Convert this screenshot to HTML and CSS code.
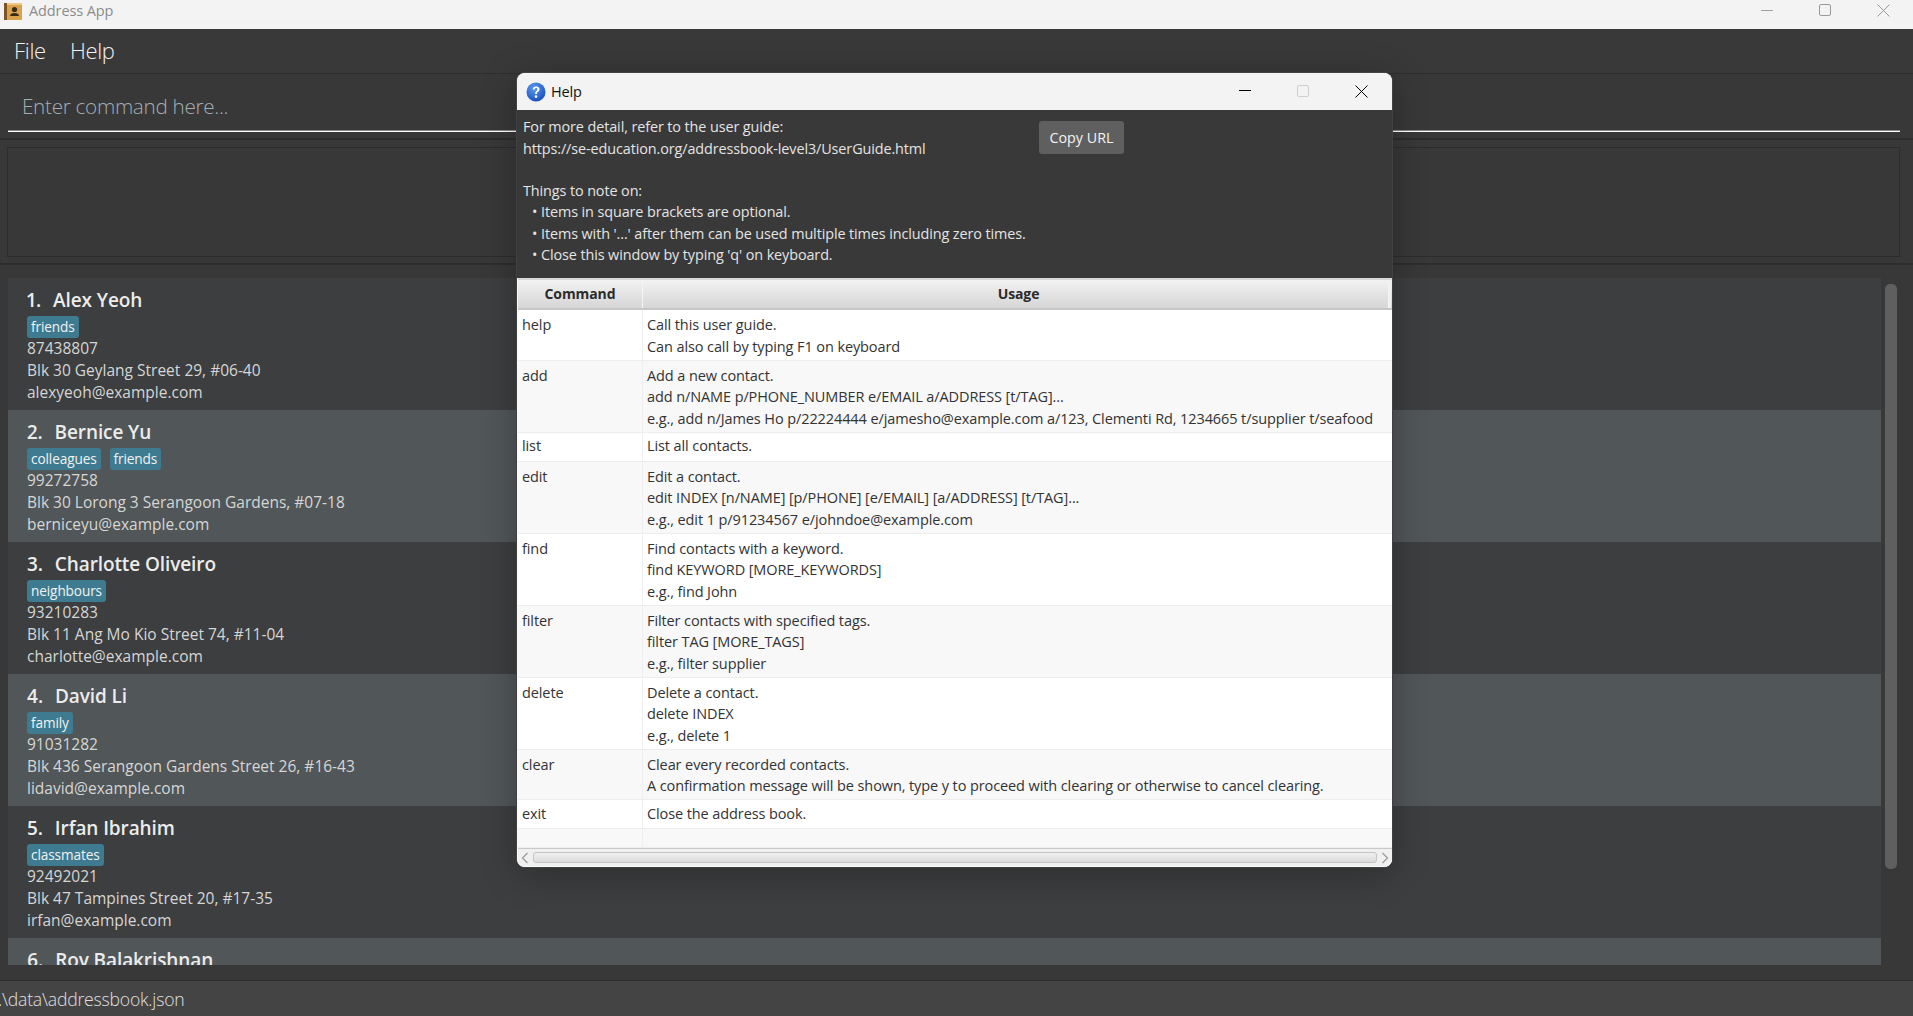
FILE: index.html
```html
<!DOCTYPE html>
<html lang="en">
<head>
<meta charset="utf-8">
<title>Address App</title>
<link rel="stylesheet" href="styles.css">
</head>
<body>
<div class="app">
  <header class="titlebar">
    <svg class="app-icon" width="18" height="17" viewBox="0 0 18 17"><rect width="18" height="17" rx="1" fill="#d9a24f"/><rect width="3" height="17" fill="#7d5427"/><rect x="3" width="15" height="2" fill="#efc983"/><circle cx="10.5" cy="6.5" r="2.6" fill="#3a2a18"/><path d="M6 13 L6.8 11 Q10.5 8.8 14.2 11 L15 13 Z" fill="#3a2a18"/></svg>
    <span class="title-text">Address App</span>
    <div class="win-controls">
      <svg width="12" height="12" viewBox="0 0 12 12"><path d="M0 6.5H12" stroke="#a0a0a0" fill="none"/></svg>
      <svg width="12" height="12" viewBox="0 0 12 12"><rect x=".5" y=".5" width="11" height="11" rx="1.5" stroke="#999" fill="none"/></svg>
      <svg width="13" height="13" viewBox="0 0 13 13"><path d="M.5 .5L12.5 12.5M12.5 .5L.5 12.5" stroke="#999" fill="none"/></svg>
    </div>
  </header>
  <nav class="menubar"><span>File</span><span>Help</span></nav>
  <section class="command"><div class="command-field">Enter command here...</div></section>
  <section class="result"><div class="result-box"></div></section>
  <main class="list-pane">
    <div class="list">
      <article class="card">
        <h2 class="name"><span class="idx">1.</span>Alex Yeoh</h2>
        <div class="tags"><span class="tag">friends</span></div>
        <p>87438807</p><p>Blk 30 Geylang Street 29, #06-40</p><p>alexyeoh@example.com</p>
      </article>
      <article class="card alt">
        <h2 class="name"><span class="idx">2.</span>Bernice Yu</h2>
        <div class="tags"><span class="tag">colleagues</span><span class="tag">friends</span></div>
        <p>99272758</p><p>Blk 30 Lorong 3 Serangoon Gardens, #07-18</p><p>berniceyu@example.com</p>
      </article>
      <article class="card">
        <h2 class="name"><span class="idx">3.</span>Charlotte Oliveiro</h2>
        <div class="tags"><span class="tag">neighbours</span></div>
        <p>93210283</p><p>Blk 11 Ang Mo Kio Street 74, #11-04</p><p>charlotte@example.com</p>
      </article>
      <article class="card alt">
        <h2 class="name"><span class="idx">4.</span>David Li</h2>
        <div class="tags"><span class="tag">family</span></div>
        <p>91031282</p><p>Blk 436 Serangoon Gardens Street 26, #16-43</p><p>lidavid@example.com</p>
      </article>
      <article class="card">
        <h2 class="name"><span class="idx">5.</span>Irfan Ibrahim</h2>
        <div class="tags"><span class="tag">classmates</span></div>
        <p>92492021</p><p>Blk 47 Tampines Street 20, #17-35</p><p>irfan@example.com</p>
      </article>
      <article class="card alt">
        <h2 class="name"><span class="idx">6.</span>Roy Balakrishnan</h2>
      </article>
    </div>
    <div class="scroll-track"><div class="scroll-thumb"></div></div>
  </main>
  <footer class="status">.\data\addressbook.json</footer>
</div>

<aside class="help-window">
  <header class="help-title">
    <svg class="help-icon" width="20" height="20" viewBox="0 0 20 20"><defs><radialGradient id="hg" cx=".4" cy=".3" r=".8"><stop offset="0" stop-color="#5b9cf0"/><stop offset="1" stop-color="#1446b8"/></radialGradient></defs><circle cx="10" cy="10" r="9.5" fill="url(#hg)"/><path d="M6.8 7.4C6.9 5.5 8.2 4.4 10.2 4.4 12.2 4.4 13.6 5.5 13.6 7.2 13.6 9.5 10.9 9.6 10.9 12H9.1C9.1 9.1 11.4 8.9 11.4 7.3 11.4 6.5 10.9 6 10.1 6 9.3 6 8.8 6.6 8.7 7.4Z" fill="#fff"/><circle cx="10" cy="14.6" r="1.3" fill="#fff"/></svg>
    <span class="help-title-text">Help</span>
    <div class="help-controls">
      <svg width="12" height="12" viewBox="0 0 12 12"><path d="M0 5.5H12" stroke="#000" fill="none"/></svg>
      <svg width="12" height="12" viewBox="0 0 12 12"><rect x=".5" y=".5" width="11" height="11" rx="1.5" stroke="#cfcfcf" fill="none"/></svg>
      <svg width="13" height="13" viewBox="0 0 13 13"><path d="M.5 .5L12.5 12.5M12.5 .5L.5 12.5" stroke="#000" fill="none"/></svg>
    </div>
  </header>
  <section class="help-notes">
    <div class="notes-head">
      <div class="guide-text">
        <div>For more detail, refer to the user guide:</div>
        <div>https://se-education.org/addressbook-level3/UserGuide.html</div>
      </div>
      <button class="copy-btn">Copy URL</button>
    </div>
    <div class="notes-title">Things to note on:</div>
    <ul class="notes-list">
      <li>Items in square brackets are optional.</li>
      <li>Items with '...' after them can be used multiple times including zero times.</li>
      <li>Close this window by typing 'q' on keyboard.</li>
    </ul>
  </section>
  <section class="cmd-table">
    <div class="thead"><div>Command</div><div class="usage-head">Usage</div><div></div></div>
    <div class="tr"><div>help</div><div>Call this user guide.<br>Can also call by typing F1 on keyboard</div></div>
    <div class="tr even"><div>add</div><div>Add a new contact.<br>add n/NAME p/PHONE_NUMBER e/EMAIL a/ADDRESS [t/TAG]...<br>e.g., add n/James Ho p/22224444 e/jamesho@example.com a/123, Clementi Rd, 1234665 t/supplier t/seafood</div></div>
    <div class="tr single"><div>list</div><div>List all contacts.</div></div>
    <div class="tr even"><div>edit</div><div>Edit a contact.<br>edit INDEX [n/NAME] [p/PHONE] [e/EMAIL] [a/ADDRESS] [t/TAG]...<br>e.g., edit 1 p/91234567 e/johndoe@example.com</div></div>
    <div class="tr"><div>find</div><div>Find contacts with a keyword.<br>find KEYWORD [MORE_KEYWORDS]<br>e.g., find John</div></div>
    <div class="tr even"><div>filter</div><div>Filter contacts with specified tags.<br>filter TAG [MORE_TAGS]<br>e.g., filter supplier</div></div>
    <div class="tr"><div>delete</div><div>Delete a contact.<br>delete INDEX<br>e.g., delete 1</div></div>
    <div class="tr even"><div>clear</div><div>Clear every recorded contacts.<br>A confirmation message will be shown, type y to proceed with clearing or otherwise to cancel clearing.</div></div>
    <div class="tr single"><div>exit</div><div>Close the address book.</div></div>
    <div class="tr even filler"><div></div><div></div></div>
    <div class="hscroll">
      <svg width="8" height="12" viewBox="0 0 8 12"><path d="M6.5 1L1.5 6L6.5 11" stroke="#999" stroke-width="1.2" fill="none"/></svg>
      <div class="hthumb"></div>
      <svg width="8" height="12" viewBox="0 0 8 12"><path d="M1.5 1L6.5 6L1.5 11" stroke="#999" stroke-width="1.2" fill="none"/></svg>
    </div>
  </section>
</aside>
</body>
</html>
```

FILE: styles.css
```css
* { box-sizing: border-box; }
html, body { margin: 0; height: 100%; }
body {
  width: 1913px;
  height: 1016px;
  overflow: hidden;
  position: relative;
  background: #383838;
  font-family: "Open Sans", "Noto Sans", sans-serif;
  color: #e0e0e0;
}
.app { display: flex; flex-direction: column; height: 1016px; }

.titlebar {
  height: 29px;
  flex: none;
  background: #f3f3f3;
  display: flex;
  align-items: center;
  padding-left: 4px;
}
.app-icon { margin-top: -6px; }
.title-text { margin-left: 7px; font-size: 14.5px; color: #8c8c8c; letter-spacing: -0.1px; margin-top: -9px; }
.win-controls { margin-left: auto; display: flex; align-items: center; gap: 46px; padding-right: 23px; margin-top: -9px; }

.menubar {
  height: 45px;
  flex: none;
  background: #393939;
  border-bottom: 1px solid #2e2e2e;
  display: flex;
  align-items: center;
  gap: 24px;
  padding: 0 0 2px 14px;
  font-size: 22px;
  font-weight: 300;
  color: #f2f2f2;
  letter-spacing: -0.3px;
}

.command {
  height: 66px;
  flex: none;
  padding: 0 13px 0 8px;
  border-bottom: 2px solid #2d2d2d;
}
.command-field {
  height: 58px;
  padding: 18px 0 0 14px;
  border-bottom: 1px solid #fff;
  box-shadow: inset 0 -1px 0 #8a8a8a;
  font-size: 20.7px;
  line-height: 28px;
  font-weight: 300;
  color: #a3aeb4;
  letter-spacing: -0.3px;
}

.result {
  height: 125px;
  flex: none;
  padding: 7px 13px 5px 7px;
  border-bottom: 2px solid #2d2d2d;
}
.result-box { height: 110px; border: 1px solid #2c2c2c; }

.list-pane {
  flex: none;
  height: 715px;
  padding: 13px 0 0 8px;
  display: flex;
  background: #383838;
}
.list { width: 1873px; height: 687px; overflow: hidden; }
.card {
  height: 132px;
  background: #3c3e3f;
  padding: 8px 0 0 19px;
  font-size: 15.5px;
  color: #d6d6d6;
}
.card.alt { background: #515658; }
.card p { margin: 0; height: 22px; line-height: 21px; }
.name {
  margin: 0;
  height: 30px;
  line-height: 28px;
  font-size: 19px;
  font-weight: 600;
  color: #ececec;
  letter-spacing: -0.1px;
  font-variant-numeric: proportional-nums;
}
.idx { margin-right: 12px; }
.tags { display: flex; gap: 9px; height: 22px; }
.tag {
  height: 22px;
  line-height: 22px;
  padding: 0 4px;
  background: #3e7b91;
  border-radius: 3px;
  font-size: 13.6px;
  color: #f2f2f2;
  letter-spacing: -0.1px;
}
.scroll-track { flex: 1; padding: 6px 0 0 4px; }
.scroll-thumb { width: 12px; height: 585px; background: #5f5f5f; border-radius: 5px; }

.status {
  height: 36px;
  flex: none;
  background: #444;
  border-top: 1px solid #2e2e2e;
  line-height: 36px;
  font-size: 17.6px;
  font-weight: 300;
  color: #e0e0e0;
  text-indent: -2px;
  white-space: nowrap;
  overflow: hidden;
  letter-spacing: -0.2px;
}

.help-window {
  position: absolute;
  left: 517px;
  top: 73px;
  width: 875px;
  height: 794px;
  border-radius: 8px;
  box-shadow: 0 6px 36px rgba(0,0,0,.28), 0 0 0 1px #4c4c4c;
  background: #f5f5f5;
  overflow: hidden;
  display: flex;
  flex-direction: column;
}
.help-title {
  height: 37px;
  flex: none;
  background: #f3f3f3;
  display: flex;
  align-items: center;
  padding-left: 9px;
}
.help-title-text { margin-left: 5px; font-size: 14.5px; color: #111; letter-spacing: -0.2px; }
.help-controls { margin-left: auto; display: flex; align-items: center; gap: 46px; padding-right: 24px; margin-top: -1px; }

.help-notes {
  height: 168px;
  flex: none;
  background: #393939;
  padding: 6px 0 0 6px;
  font-size: 14.4px;
  line-height: 21.4px;
  color: #e4e4e4;
  letter-spacing: -0.1px;
}
.notes-head { display: flex; height: 64px; }
.guide-text { width: 516px; line-height: 22px; }
.copy-btn {
  width: 85px;
  height: 33px;
  margin-top: 5px;
  border: 0;
  border-radius: 3px;
  background: #5f5f5f;
  color: #f4f4f4;
  font: inherit;
  font-size: 14.3px;
  padding: 0;
}
.notes-list { margin: 0; padding: 0 0 0 18px; list-style: none; }
.notes-list li { position: relative; }
.notes-list li::before { content: "•"; position: absolute; left: -9px; }

.cmd-table {
  flex: 1;
  background: #f8f8f8;
  padding-left: 1px;
  font-size: 14.5px;
  line-height: 21.5px;
  color: #333;
  letter-spacing: -0.1px;
  white-space: nowrap;
  display: flex;
  flex-direction: column;
}
.thead {
  height: 32px;
  flex: none;
  display: grid;
  grid-template-columns: 124px 746px 3px;
  background: linear-gradient(#f2f2f2, #d6d6d6);
  border-top: 2px solid #d8d8d8;
  border-bottom: 2px solid #c6c6c6;
  font-size: 14px;
  font-weight: 700;
  color: #2b2b2b;
  line-height: 27px;
  text-align: center;
}
.thead > div + div { border-left: 1px solid #f4f4f4; }
.thead > div:last-child { background: #f0f0f0; }
.thead > .usage-head { padding-left: 6px; }
.tr {
  flex: none;
  display: grid;
  grid-template-columns: 124px 1fr;
  background: #fff;
  box-shadow: inset 0 -1px 0 #ededed;
}
.tr.even { background: #f8f8f8; }
.tr > div { padding: 4px 0 3.5px 4px; }
.tr.single > div { padding: 2.5px 0 5px 4px; }
.tr > div + div { border-left: 1px solid #efefef; }
.tr.filler { height: 19px; }
.tr.filler > div { padding: 0; }
.hscroll {
  flex: none;
  height: 18px;
  display: flex;
  align-items: center;
  gap: 4px;
  padding: 0 3px;
  background: #f0f0f0;
  border-top: 1px solid #c9c9c9;
}
.hthumb {
  flex: 1;
  height: 11px;
  border-radius: 3px;
  border: 1px solid #c4c4c4;
  background: linear-gradient(#f0f0f0, #dcdcdc);
}
```
